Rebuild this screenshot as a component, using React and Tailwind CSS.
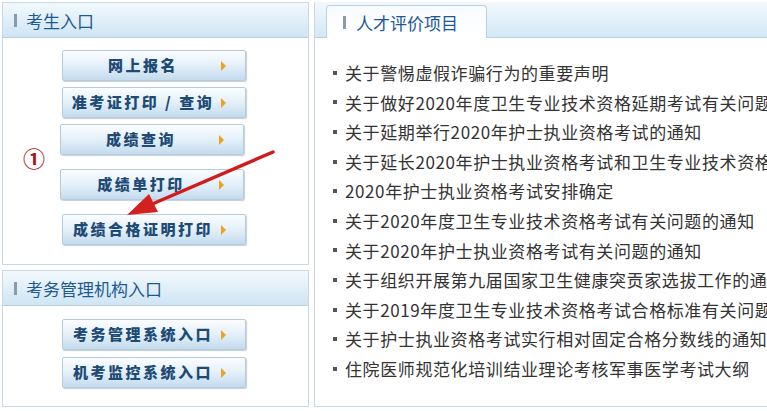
const font = { fontFamily: '"Noto Sans CJK SC", "Noto Sans", sans-serif' };

function PanelHeader({ title }) {
  return (
    <div className="h-[35px] flex items-center pl-[11px] border-b border-[#b9cfe0] bg-gradient-to-b from-[#f3f9fd] to-[#cfe5f4]">
      <span className="w-[3px] h-[13px] bg-[#8a9aa8] mr-[9px]" />
      <span className="text-[17px] text-[#1d5a94] leading-none">{title}</span>
    </div>
  );
}

function Btn({ label, className = '' }) {
  return (
    <div
      className={`w-[184px] h-[31px] flex items-center rounded-[2px] border border-[#b6cbdc] bg-gradient-to-b from-[#fbfdff] via-[#e4f0f9] to-[#c3dbee] shadow-[1px_1px_1px_rgba(90,120,150,0.35)] ${className}`}
    >
      <span className="flex-1 text-center text-[15px] font-black text-[#1e4a76] tracking-[2.5px] pl-[4px]">
        {label}
      </span>
      <span className="w-0 h-0 border-y-[5px] border-y-transparent border-l-[5px] border-l-[#f0a020] mr-[19px] ml-[2px]" />
    </div>
  );
}

const news = [
  '关于警惕虚假诈骗行为的重要声明',
  '关于做好2020年度卫生专业技术资格延期考试有关问题的通知',
  '关于延期举行2020年护士执业资格考试的通知',
  '关于延长2020年护士执业资格考试和卫生专业技术资格考试报名时间的通知',
  '2020年护士执业资格考试安排确定',
  '关于2020年度卫生专业技术资格考试有关问题的通知',
  '关于2020年护士执业资格考试有关问题的通知',
  '关于组织开展第九届国家卫生健康突贡家选拔工作的通知',
  '关于2019年度卫生专业技术资格考试合格标准有关问题的通知',
  '关于护士执业资格考试实行相对固定合格分数线的通知',
  '住院医师规范化培训结业理论考核军事医学考试大纲',
];

export default function App() {
  return (
    <div className="relative w-[767px] h-[411px] overflow-hidden bg-white flex pt-[2px] pl-[2px]" style={font}>
      <div className="w-[307px] shrink-0 flex flex-col gap-[5px]">
        <div className="relative h-[263px] border border-[#c8d8e5]">
          <PanelHeader title="考生入口" />
          <div className="flex flex-col items-center pt-[12px] pr-[3px]">
            <Btn label="网上报名" />
            <Btn label="准考证打印 / 查询" className="mt-[6px]" />
            <Btn label="成绩查询" className="mt-[6px] -translate-x-[2px]" />
            <Btn label="成绩单打印" className="mt-[14px] -translate-x-[2px]" />
            <Btn label="成绩合格证明打印" className="mt-[14px]" />
          </div>
          <span className="absolute left-[20px] top-[143px] text-[22px] font-bold text-[#a81616] leading-none">①</span>
        </div>
        <div className="h-[137px] border border-[#c8d8e5]">
          <PanelHeader title="考务管理机构入口" />
          <div className="flex flex-col items-center pt-[13px] pr-[3px]">
            <Btn label="考务管理系统入口" />
            <Btn label="机考监控系统入口" className="mt-[7px]" />
          </div>
        </div>
      </div>

      <div className="ml-[5px] w-[600px] shrink-0 h-[405px] border-l border-b border-[#c8d8e5] flex flex-col">
        <div className="h-[36px] border-b border-[#b9cfe0] bg-gradient-to-b from-[#f3f9fd] to-[#d3e8f6] flex items-end pl-[11px]">
          <div className="w-[161px] h-[33px] -mb-px bg-gradient-to-b from-[#f8fbfe] to-white border border-b-0 border-[#bcd0e0] rounded-t-[4px] flex items-center pl-[16px]">
            <span className="w-[3px] h-[13px] bg-[#8a9aa8] mr-[10px]" />
            <span className="text-[17px] text-[#1d5a94] leading-none">人才评价项目</span>
          </div>
        </div>
        <ul className="pt-[20px] pl-[18px]">
          {news.map((t) => (
            <li key={t} className="h-[29.6px] flex items-center whitespace-nowrap text-[17px] tracking-[0.6px] text-[#333]">
              <span className="w-[4px] h-[4px] bg-[#555] mr-[8px] shrink-0" />
              {t}
            </li>
          ))}
        </ul>
      </div>

      <svg className="absolute left-0 top-0 pointer-events-none" width="767" height="411">
        <line x1="273" y1="152" x2="150" y2="205" stroke="#d01c1c" strokeWidth="3.5" strokeLinecap="round" />
        <polygon points="127,215 149,194 158,212" fill="#d42020" />
      </svg>
    </div>
  );
}
